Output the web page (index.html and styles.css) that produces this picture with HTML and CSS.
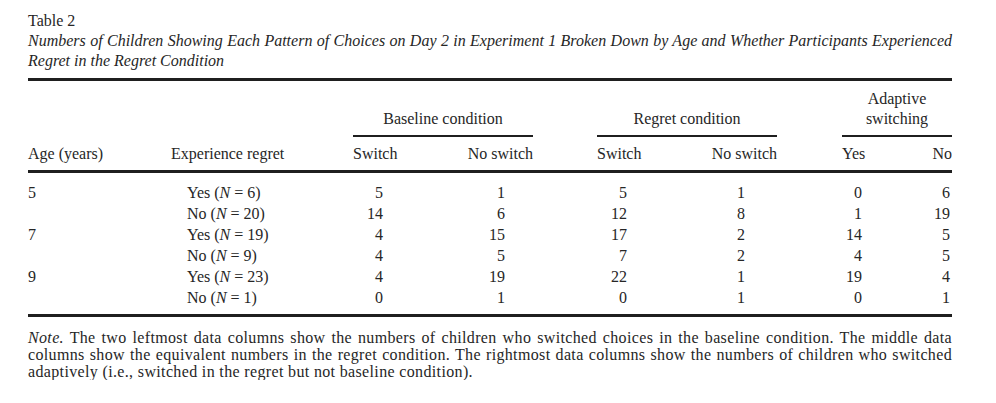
FILE: index.html
```html
<!DOCTYPE html>
<html lang="en">
<head>
<meta charset="utf-8">
<title>Table 2</title>
<link rel="stylesheet" href="styles.css">
</head>
<body>
<div class="page">
  <div class="label">Table 2</div>
  <div class="title">
    <span class="jline">Numbers of Children Showing Each Pattern of Choices on Day 2 in Experiment 1 Broken Down by Age and Whether Participants Experienced</span>
    <span class="line">Regret in the Regret Condition</span>
  </div>
  <table class="data">
    <colgroup>
      <col class="c-age"><col class="c-exp"><col class="c-num"><col class="c-num"><col class="c-gap1">
      <col class="c-num"><col class="c-num"><col class="c-gap2"><col class="c-adp"><col class="c-adp">
    </colgroup>
    <thead>
      <tr class="r-group">
        <td></td><td></td>
        <th colspan="2" class="group">Baseline condition</th>
        <td></td>
        <th colspan="2" class="group">Regret condition</th>
        <td></td>
        <th colspan="2" class="group">Adaptive<br>switching</th>
      </tr>
      <tr class="r-head">
        <th class="left">Age (years)</th>
        <th class="left">Experience regret</th>
        <th class="left">Switch</th>
        <th class="right">No switch</th>
        <th></th>
        <th class="left">Switch</th>
        <th class="right">No switch</th>
        <th></th>
        <th class="left">Yes</th>
        <th class="right">No</th>
      </tr>
    </thead>
    <tbody>
      <tr><td>5</td><td class="exp">Yes (<i>N</i> = 6)</td><td class="n b1">5</td><td class="n b2">1</td><td></td><td class="n r1">5</td><td class="n r2">1</td><td></td><td class="n a1">0</td><td class="n a2">6</td></tr>
      <tr><td></td><td class="exp">No (<i>N</i> = 20)</td><td class="n b1">14</td><td class="n b2">6</td><td></td><td class="n r1">12</td><td class="n r2">8</td><td></td><td class="n a1">1</td><td class="n a2">19</td></tr>
      <tr><td>7</td><td class="exp">Yes (<i>N</i> = 19)</td><td class="n b1">4</td><td class="n b2">15</td><td></td><td class="n r1">17</td><td class="n r2">2</td><td></td><td class="n a1">14</td><td class="n a2">5</td></tr>
      <tr><td></td><td class="exp">No (<i>N</i> = 9)</td><td class="n b1">4</td><td class="n b2">5</td><td></td><td class="n r1">7</td><td class="n r2">2</td><td></td><td class="n a1">4</td><td class="n a2">5</td></tr>
      <tr><td>9</td><td class="exp">Yes (<i>N</i> = 23)</td><td class="n b1">4</td><td class="n b2">19</td><td></td><td class="n r1">22</td><td class="n r2">1</td><td></td><td class="n a1">19</td><td class="n a2">4</td></tr>
      <tr><td></td><td class="exp">No (<i>N</i> = 1)</td><td class="n b1">0</td><td class="n b2">1</td><td></td><td class="n r1">0</td><td class="n r2">1</td><td></td><td class="n a1">0</td><td class="n a2">1</td></tr>
    </tbody>
  </table>
  <div class="note">
    <span class="jline"><i>Note.</i> The two leftmost data columns show the numbers of children who switched choices in the baseline condition. The middle data</span>
    <span class="jline">columns show the equivalent numbers in the regret condition. The rightmost data columns show the numbers of children who switched</span>
    <span class="line">adaptively (i.e., switched in the regret but not baseline condition).</span>
  </div>
</div>
</body>
</html>
```

FILE: styles.css
```css
html, body {
  margin: 0;
  padding: 0;
  background: #ffffff;
}

body {
  font-family: "Liberation Serif", "Times New Roman", serif;
  font-size: 16px;
  color: #262626;
}

.page {
  width: 924px;
  padding: 11px 0 0 28px;
}

.label {
  line-height: 20px;
}

.title {
  font-style: italic;
  line-height: 20px;
}

.jline {
  display: block;
  text-align: justify;
  text-align-last: justify;
  white-space: nowrap;
}

.line {
  display: block;
  white-space: nowrap;
}

.data {
  margin-top: 7px;
  width: 924px;
  table-layout: fixed;
  border-collapse: separate;
  border-spacing: 0;
  border-top: 3px solid #1f1f1f;
  border-bottom: 3px solid #1f1f1f;
}

.c-age { width: 143px; }
.c-exp { width: 182px; }
.c-num { width: 90px; }
.c-gap1 { width: 64px; }
.c-gap2 { width: 65px; }
.c-adp { width: 55px; }

.data th,
.data td {
  padding: 0;
  font-weight: normal;
  line-height: 21px;
  white-space: nowrap;
}

.r-group th,
.r-group td {
  line-height: 20px;
  vertical-align: bottom;
  padding-top: 8px;
  padding-bottom: 6px;
}

.r-group th.group {
  text-align: center;
  border-bottom: 2px solid #1f1f1f;
}

.r-head th {
  line-height: 20px;
  padding-top: 7px;
  padding-bottom: 6px;
  border-bottom: 3px solid #1f1f1f;
}

.left { text-align: left; }
.right { text-align: right; }

.data tbody tr:first-child td { padding-top: 9px; }
.data tbody tr:last-child td { padding-bottom: 6px; }

.exp { padding-left: 16px !important; }

.n { text-align: right; }
.b1 { padding-right: 60px !important; }
.b2 { padding-right: 28px !important; }
.r1 { padding-right: 60px !important; }
.r2 { padding-right: 32px !important; }
.a1 { padding-right: 35px !important; }
.a2 { padding-right: 2px !important; }

.note {
  margin-top: 12px;
  line-height: 17px;
  width: 924px;
  letter-spacing: 0.35px;
}
```
